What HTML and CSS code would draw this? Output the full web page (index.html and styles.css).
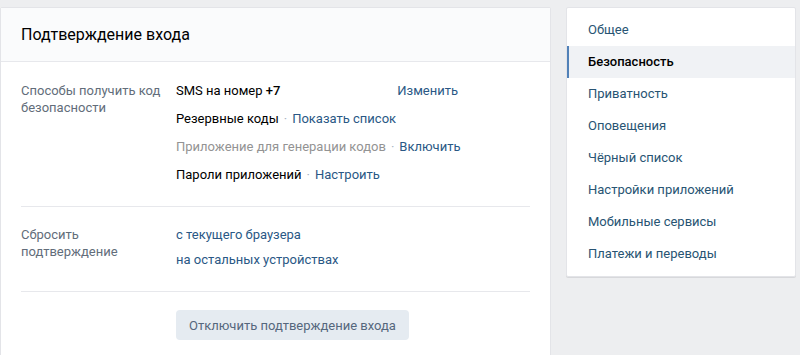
FILE: index.html
```html
<!DOCTYPE html>
<html lang="ru">
<head>
  <meta charset="UTF-8">
  <title>Безопасность</title>
  <link rel="stylesheet" href="styles.css">
</head>
<body>
  <div class="page">
    <div class="main-card">
      <div class="card-header">Подтверждение входа</div>

      <div class="section">
        <div class="label">Способы получить код безопасности</div>
        <div class="values">
          <div class="row"><span class="dark">SMS на номер <b>+7</b></span><a class="link change" href="#">Изменить</a></div>
          <div class="row"><span class="dark">Резервные коды</span><span class="dot">·</span><a class="link" href="#">Показать список</a></div>
          <div class="row"><span class="muted">Приложение для генерации кодов</span><span class="dot">·</span><a class="link" href="#">Включить</a></div>
          <div class="row"><span class="dark">Пароли приложений</span><span class="dot">·</span><a class="link" href="#">Настроить</a></div>
        </div>
      </div>

      <div class="section reset">
        <div class="label">Сбросить подтверждение</div>
        <div class="values">
          <div class="row"><a class="link" href="#">с текущего браузера</a></div>
          <div class="row"><a class="link" href="#">на остальных устройствах</a></div>
        </div>
      </div>

      <div class="section actions">
        <button class="btn" type="button">Отключить подтверждение входа</button>
      </div>
    </div>

    <div class="menu-card">
      <a class="menu-item" href="#">Общее</a>
      <a class="menu-item active" href="#">Безопасность</a>
      <a class="menu-item" href="#">Приватность</a>
      <a class="menu-item" href="#">Оповещения</a>
      <a class="menu-item" href="#">Чёрный список</a>
      <a class="menu-item" href="#">Настройки приложений</a>
      <a class="menu-item" href="#">Мобильные сервисы</a>
      <a class="menu-item" href="#">Платежи и переводы</a>
    </div>
  </div>
</body>
</html>
```

FILE: styles.css
```css
body{
  margin:0;
  background:#edeef0;
  font-family:Roboto, "Liberation Sans", sans-serif;
  font-size:13px;
  color:#000;
}

.page{
  display:flex;
  align-items:flex-start;
  gap:15px;
  padding-top:7px;
}

a{
  text-decoration:none;
}

/* основная карточка */
.main-card{
  width:549px;
  background:#fff;
  border:1px solid #e3e4e8;
  border-radius:2px;
  padding-bottom:20px;
}

.card-header{
  height:53px;
  line-height:53px;
  padding:0 20px;
  background:#fafbfc;
  border-bottom:1px solid #e7e8ec;
  font-size:16px;
  color:#000;
}

.section{
  display:flex;
  margin:0 20px;
  padding:20px 0 23px;
  line-height:17px;
}
.section + .section{
  border-top:1px solid #e7e8ec;
}

.label{
  width:155px;
  color:#626d7a;
  padding-right:10px;
  box-sizing:border-box;
}

.values{
  flex:1;
  display:flex;
  flex-direction:column;
  gap:11px;
}

.row{
  display:flex;
}

.dark{
  color:#000;
}
.dark b{
  font-weight:500;
}
.muted{
  color:#939393;
}
.dot{
  color:#a8b4c2;
  padding:0 5px;
}
.link{
  color:#2a5885;
}
.change{
  margin-left:auto;
  margin-right:72px;
}

.reset{
  padding:19px 0 23px;
}
.reset .values{
  gap:8px;
}

.actions{
  padding:18px 0 0 155px;
}

.btn{
  height:30px;
  padding:0 13px;
  border:none;
  border-radius:4px;
  background:#e5ebf1;
  color:#55677d;
  font-family:inherit;
  font-size:13px;
}

/* меню справа */
.menu-card{
  width:228px;
  background:#fff;
  border:1px solid #e3e4e8;
  border-radius:2px;
  box-shadow:0 1px 0 #d7d8db;
  padding:6px 0;
}

.menu-item{
  display:block;
  height:32px;
  line-height:32px;
  padding:0 19px;
  color:#285473;
  border-left:2px solid transparent;
}
.menu-item.active{
  background:#f0f2f5;
  border-left-color:#5181b8;
  color:#000;
  font-weight:500;
}
```
